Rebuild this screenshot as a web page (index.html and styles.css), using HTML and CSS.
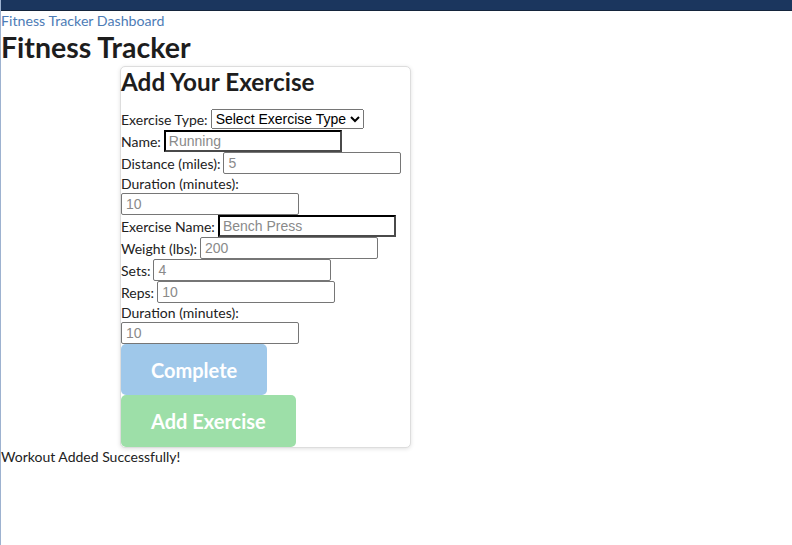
FILE: index.html
```html
<!DOCTYPE html>
<html lang="en">
<head>
<meta charset="utf-8">
<title>Fitness Tracker</title>
<link rel="stylesheet" href="styles.css">
</head>
<body>
<div class="page">
  <div class="topbar"></div>
  <a class="nav-link" href="#">Fitness Tracker Dashboard</a>
  <h1 class="title">Fitness Tracker</h1>
  <div class="card">
    <h2 class="card-title">Add Your Exercise</h2>
    <form class="form">
      <div class="field">
        <label>Exercise Type:</label>
        <select class="select"><option>Select Exercise Type</option></select>
      </div>
      <div class="field">
        <label>Name:</label>
        <input class="input input-strong" type="text" placeholder="Running">
      </div>
      <div class="field">
        <label>Distance (miles):</label>
        <input class="input" type="text" placeholder="5">
      </div>
      <div class="field">
        <label>Duration (minutes):</label>
        <input class="input" type="text" placeholder="10">
      </div>
      <div class="field">
        <label>Exercise Name:</label>
        <input class="input input-strong" type="text" placeholder="Bench Press">
      </div>
      <div class="field">
        <label>Weight (lbs):</label>
        <input class="input" type="text" placeholder="200">
      </div>
      <div class="field">
        <label>Sets:</label>
        <input class="input" type="text" placeholder="4">
      </div>
      <div class="field">
        <label>Reps:</label>
        <input class="input" type="text" placeholder="10">
      </div>
      <div class="field">
        <label>Duration (minutes):</label>
        <input class="input" type="text" placeholder="10">
      </div>
      <button class="btn btn-blue" type="button">Complete</button>
      <button class="btn btn-green" type="button">Add Exercise</button>
    </form>
  </div>
  <p class="success">Workout Added Successfully!</p>
</div>
</body>
</html>
```

FILE: styles.css
```css
html, body {
  margin: 0;
  padding: 0;
  background: #ffffff;
}

body {
  font-family: Lato, "Liberation Sans", sans-serif;
  font-size: 14px;
  color: #222222;
}

.page {
  border-left: 1px solid #9db2d0;
  min-height: 545px;
  box-sizing: border-box;
}

.topbar {
  height: 10px;
  background: #1b365e;
  border-bottom: 1px solid #14243b;
}

.nav-link {
  display: block;
  color: #4d7cb6;
  text-decoration: none;
  font-size: 14.2px;
  line-height: 17px;
  padding-top: 1px;
}

.title {
  margin: 0;
  font-size: 28.5px;
  font-weight: 700;
  line-height: 37px;
  color: #1d1d1d;
}

.card {
  margin-left: 119px;
  width: 291px;
  box-sizing: border-box;
  border: 1px solid #dddddd;
  border-radius: 5px;
  box-shadow: 0 1px 4px rgba(0, 0, 0, 0.12);
  margin-top: 0;
  background: #fff;
}

.card-title {
  margin: 0 0 11px 0;
  font-size: 24.3px;
  font-weight: 700;
  line-height: 30px;
  color: #1d1d1d;
}

.form {
  display: block;
}

.field {
  display: flex;
  flex-wrap: wrap;
  align-items: center;
  column-gap: 3px;
  min-height: 22px;
}

.field label {
  font-size: 14px;
  line-height: 19px;
}

.input {
  width: 178px;
  height: 22px;
  box-sizing: border-box;
  font-family: "Liberation Sans", Arial, sans-serif;
  font-size: 14px;
  padding: 1px 4px;
  margin: 0;
  border: 1px solid #767676;
  border-radius: 2px;
}

.input-strong {
  border: 2px inset #4a4a4a;
  border-radius: 0;
  padding: 0 3px;
}

.input::placeholder {
  color: #8a8a8a;
}

.select {
  font-family: "Liberation Sans", Arial, sans-serif;
  font-size: 14px;
  height: 20px;
  margin: 0;
}

.btn {
  display: block;
  border: none;
  border-radius: 5px;
  padding: 0 30px;
  height: 51px;
  font-family: Lato, "Liberation Sans", sans-serif;
  font-size: 20px;
  font-weight: 700;
  color: #ffffff;
  cursor: pointer;
}

.btn-blue {
  background: #9fc8ea;
}

.btn-green {
  background: #9ddfa8;
  height: 52px;
}

.success {
  margin: 0;
  padding-top: 0;
  line-height: 17px;
}
```
